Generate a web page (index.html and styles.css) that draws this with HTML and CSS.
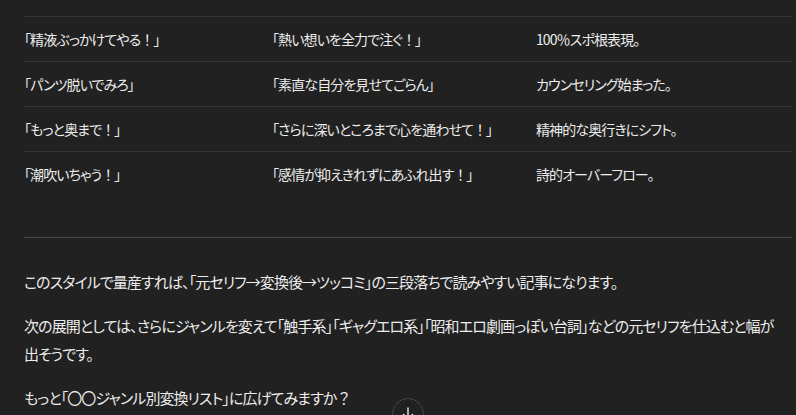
FILE: index.html
```html
<!DOCTYPE html>
<html lang="ja">
<head>
    <meta charset="UTF-8">
    <meta name="viewport" content="width=device-width, initial-scale=1.0">
    <title>変換リスト</title>
    <link rel="stylesheet" href="styles.css">
</head>
<body>
    <div class="chat">
        <div class="message">
            <div class="table">
                <div class="row">
                    <div class="cell">「精液ぶっかけてやる<span class="bang">！</span>」</div>
                    <div class="cell">「熱い想いを全力で注ぐ<span class="bang">！</span>」</div>
                    <div class="cell">100％スポ根表現。</div>
                </div>
                <div class="row">
                    <div class="cell">「パンツ脱いでみろ」</div>
                    <div class="cell">「素直な自分を見せてごらん」</div>
                    <div class="cell">カウンセリング始まった。</div>
                </div>
                <div class="row">
                    <div class="cell">「もっと奥まで<span class="bang">！</span>」</div>
                    <div class="cell">「さらに深いところまで心を通わせて<span class="bang">！</span>」</div>
                    <div class="cell">精神的な奥行きにシフト。</div>
                </div>
                <div class="row">
                    <div class="cell">「潮吹いちゃう<span class="bang">！</span>」</div>
                    <div class="cell">「感情が抑えきれずにあふれ出す<span class="bang">！</span>」</div>
                    <div class="cell">詩的オーバーフロー。</div>
                </div>
            </div>

            <hr class="divider">

            <p>このスタイルで量産すれば、「元セリフ→変換後→ツッコミ」の三段落ちで読みやすい記事になります。</p>
            <p>次の展開としては、さらにジャンルを変えて「触手系」「ギャグエロ系」「昭和エロ劇画っぽい台詞」などの元セリフを仕込むと幅が出そうです。</p>
            <p>もっと「〇〇ジャンル別変換リスト」に広げてみますか<span class="bang">？</span></p>
        </div>

        <button class="scroll-down" type="button" aria-label="下へスクロール">
            <svg width="16" height="16" viewBox="0 0 16 16" fill="none" stroke="#d0d0d0" stroke-width="1.6" stroke-linecap="round" stroke-linejoin="round">
                <path d="M8 2v11"/>
                <path d="M3.5 8.5L8 13l4.5-4.5"/>
            </svg>
        </button>
    </div>
</body>
</html>
```

FILE: styles.css
```css
body {
    margin: 0;
    padding: 0;
    background-color: #212121;
    color: #ececec;
    font-family: "Noto Sans CJK JP", "Noto Sans", sans-serif;
    font-feature-settings: "palt";
    overflow: hidden;
}
.chat {
    position: relative;
    height: 415px;
}
.message {
    padding: 16px 4px 0 24px;
}
.table {
    border-top: 1px solid #333333;
    font-size: 14px;
    letter-spacing: -0.9px;
}
.row {
    display: grid;
    grid-template-columns: 248px 264px 1fr;
    height: 44px;
    align-items: center;
    border-bottom: 1px solid #333333;
}
.row:last-child {
    border-bottom: none;
}
.bang {
    font-feature-settings: normal;
}
.divider {
    border: none;
    border-top: 1px solid #4a4a4a;
    margin: 41px 0 0 0;
}
p {
    font-size: 15px;
    letter-spacing: -0.9px;
    line-height: 28px;
    margin: 30px 14px 16px 0;
}
p + p {
    margin-top: 0;
}
.scroll-down {
    position: absolute;
    left: 392px;
    top: 398px;
    width: 32px;
    height: 32px;
    border-radius: 50%;
    border: 1px solid #454545;
    background-color: #212121;
    padding: 0;
    display: flex;
    justify-content: center;
    align-items: center;
    cursor: pointer;
}
```
